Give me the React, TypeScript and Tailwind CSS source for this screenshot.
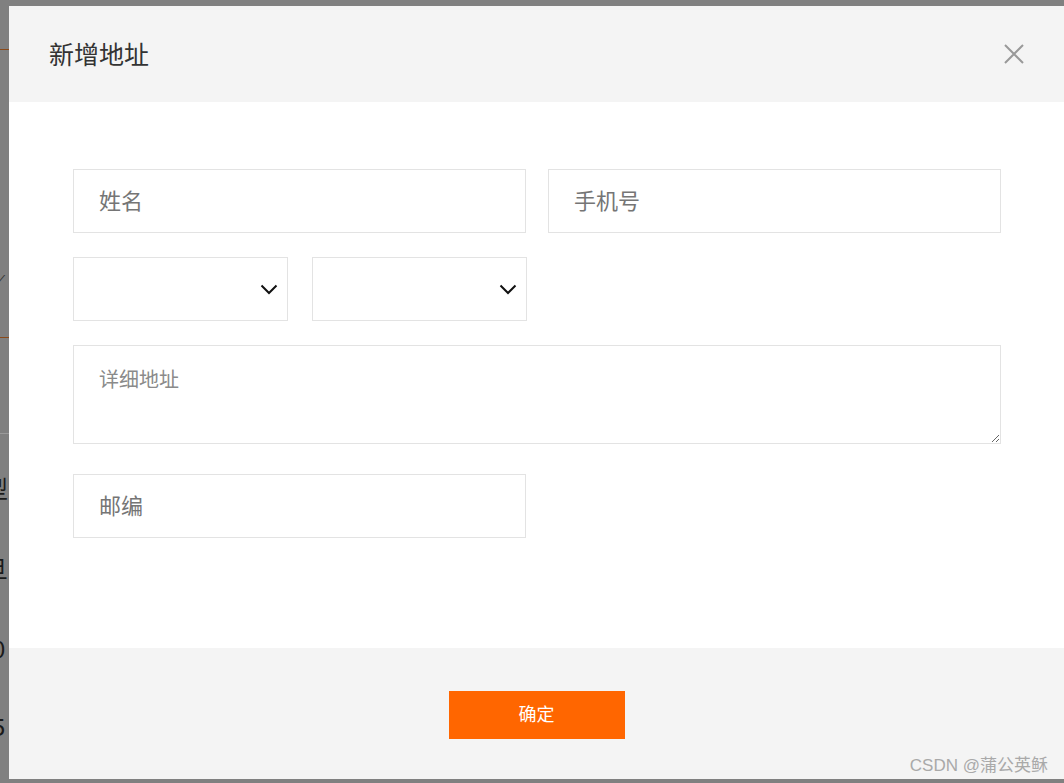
import React from "react";

const cjk = { fontFamily: '"Noto Sans CJK SC", "Noto Sans", sans-serif' };

const Chevron = () => (
  <svg width="18" height="12" viewBox="0 0 18 12" fill="none">
    <path d="M1.5 2.5 L9 10 L16.5 2.5" stroke="#111" strokeWidth="2" />
  </svg>
);

const CloseIcon = () => (
  <svg width="22" height="22" viewBox="0 0 22 22" fill="none">
    <path d="M2 2 L20 20 M20 2 L2 20" stroke="#999" strokeWidth="2" />
  </svg>
);

const field =
  "h-[64px] border border-[#e3e3e3] px-[25px] pb-[5px] text-[22px] text-[#333] outline-none placeholder:text-[#757575]";

export default function App() {
  return (
    <div className="relative flex h-[783px] w-[1064px] overflow-hidden bg-[#808080]" style={cjk}>
      {/* dimmed page behind the dialog */}
      <div className="w-[9px] shrink-0 overflow-hidden">
        <div className="relative h-full w-[9px]">
          <div className="mt-[49px] h-px w-full bg-[#8a4a1a]" />
          <div className="mt-[222px] -ml-[6px] text-[16px] leading-none text-[#333]">⟋</div>
          <div className="mt-[49px] h-px w-full bg-[#8a4a1a]" />
          <div className="mt-[95px] h-px w-full bg-[#9a9a9a]" />
          <div className="mt-[42px] -ml-[16px] text-[24px] leading-none text-[#1a1a1a]">型</div>
          <div className="mt-[56px] -ml-[16px] text-[24px] leading-none text-[#1a1a1a]">旦</div>
          <div className="mt-[56px] -ml-[8px] text-[24px] leading-none text-[#1a1a1a]">0</div>
          <div className="mt-[54px] -ml-[8px] text-[24px] leading-none text-[#1a1a1a]">5</div>
        </div>
      </div>

      {/* dialog */}
      <div className="mt-[6px] mb-[4px] flex w-[1055px] shrink-0 flex-col bg-white">
        <div className="flex h-[96px] shrink-0 items-center justify-between bg-[#f4f4f4] pl-[40px] pr-[39px]">
          <h2 className="text-[25px] font-normal text-[#333]">新增地址</h2>
          <button aria-label="关闭" className="flex items-center">
            <CloseIcon />
          </button>
        </div>

        <div className="flex h-[546px] shrink-0 flex-col pl-[64px] pt-[67px]">
          <div className="grid w-[928px] grid-cols-2 gap-[22px]">
            <input placeholder="姓名" className={field} />
            <input placeholder="手机号" className={field} />
          </div>

          <div className="mt-[24px] flex gap-[24px]">
            <div className="flex h-[64px] w-[215px] items-center justify-end border border-[#e3e3e3] pr-[9px]">
              <Chevron />
            </div>
            <div className="flex h-[64px] w-[215px] items-center justify-end border border-[#e3e3e3] pr-[9px]">
              <Chevron />
            </div>
          </div>

          <textarea
            placeholder="详细地址"
            className="mt-[24px] h-[99px] w-[928px] border border-[#e3e3e3] px-[25px] pt-[19px] text-[20px] leading-[28px] text-[#333] outline-none placeholder:text-[#8a8a8a]"
          />

          <input placeholder="邮编" className={`mt-[30px] w-[453px] ${field}`} />
        </div>

        <div className="flex flex-1 justify-center bg-[#f4f4f4] pt-[43px]">
          <button className="h-[48px] w-[176px] bg-[#ff6600] pb-[3px] text-[18px] text-white">确定</button>
        </div>
      </div>

      <div
        className="absolute bottom-[5px] right-[16px] text-[17px] text-[#a9a9a9]"
        style={{ fontFamily: '"Liberation Sans", "Noto Sans CJK SC", sans-serif' }}
      >
        CSDN @蒲公英稣
      </div>
    </div>
  );
}
